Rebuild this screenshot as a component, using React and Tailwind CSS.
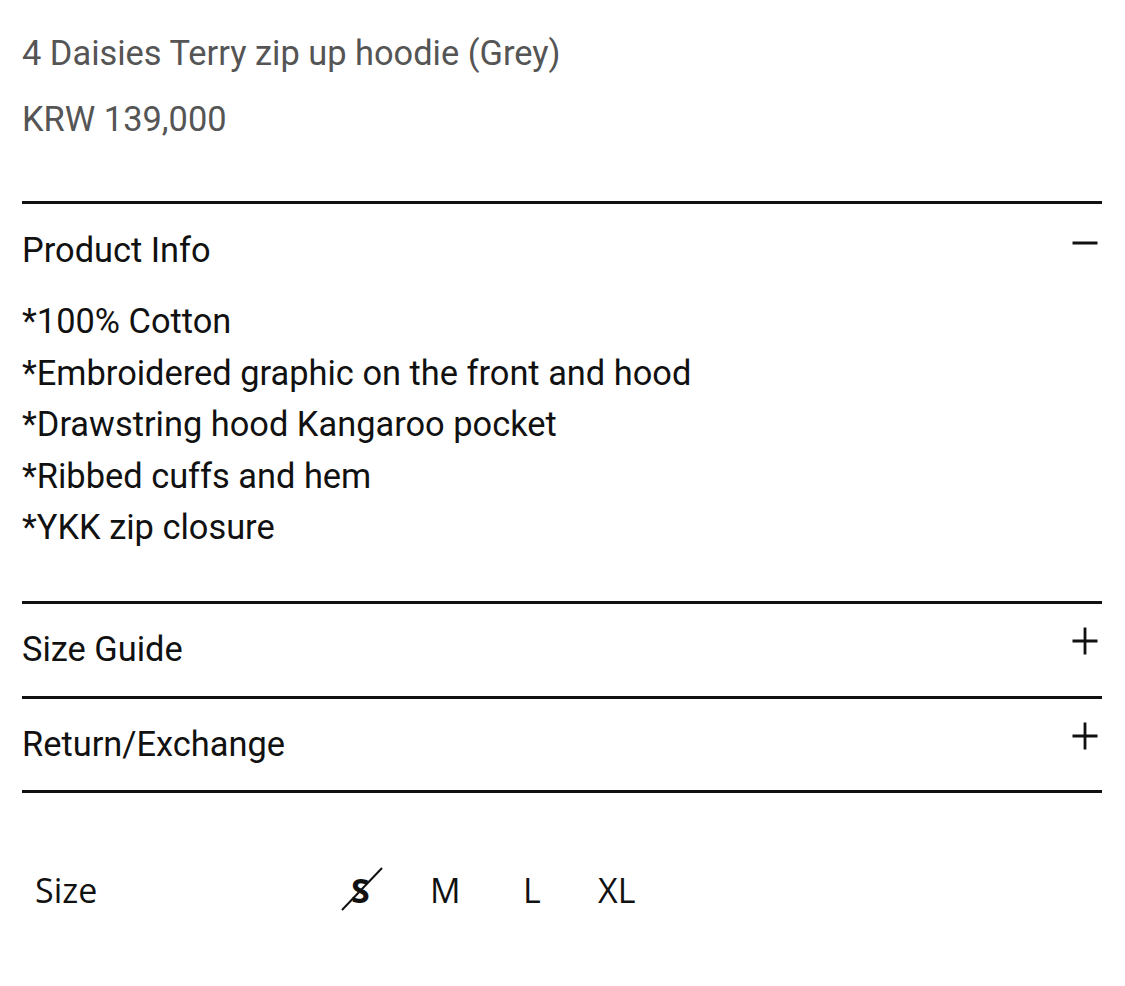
const infoLines = [
  "*100% Cotton",
  "*Embroidered graphic on the front and hood",
  "*Drawstring hood Kangaroo pocket",
  "*Ribbed cuffs and hem",
  "*YKK zip closure",
];

const Minus = () => (
  <svg width="26" height="26" viewBox="0 0 26 26" className="mt-[4px] mr-[4px]">
    <path d="M0.5 14h25" stroke="#111" strokeWidth="3" />
  </svg>
);

const Plus = () => (
  <svg width="26" height="28" viewBox="0 0 26 28" className="mt-[3px] mr-[4px]">
    <path d="M0.5 14h25M13 0.5v27" stroke="#111" strokeWidth="2.8" />
  </svg>
);

const Divider = ({ className }) => (
  <div className={`h-[3px] bg-[#111] ${className}`}></div>
);

const App = () => {
  return (
    <div className="w-[1125px] h-[986px] bg-white font-['Roboto',sans-serif] px-[22px] pr-[23px] overflow-hidden">
      <h1 className="pt-[28px] text-[34.4px] leading-[50px] text-[#555]">
        4 Daisies Terry zip up hoodie (Grey)
      </h1>
      <p className="mt-[16px] text-[34.4px] leading-[50px] text-[#555]">
        KRW 139,000
      </p>

      <Divider className="mt-[57px]" />

      <div className="mt-[21px] flex justify-between items-start text-[#111]">
        <span className="text-[34.4px] leading-[50px]">Product Info</span>
        <Minus />
      </div>
      <ul className="mt-[21px] text-[34.4px] leading-[51.5px] text-[#111]">
        {infoLines.map((line, idx) => (
          <li key={idx}>{line}</li>
        ))}
      </ul>

      <Divider className="mt-[47px]" />
      <div className="mt-[20px] flex justify-between items-start text-[#111]">
        <span className="text-[34.4px] leading-[50px]">Size Guide</span>
        <Plus />
      </div>
      <Divider className="mt-[22px]" />
      <div className="mt-[20px] flex justify-between items-start text-[#111]">
        <span className="text-[34.4px] leading-[50px]">Return/Exchange</span>
        <Plus />
      </div>
      <Divider className="mt-[21px]" />

      <div className="mt-[72px] flex items-center h-[50px] font-['Open_Sans',sans-serif] text-[34px] leading-[50px] text-[#111]">
        <span className="ml-[13px] w-[316px]">Size</span>
        <span className="relative font-bold w-[79px]">
          S
          <svg
            width="44"
            height="46"
            viewBox="0 0 44 46"
            className="absolute left-[-10px] top-[2px]"
          >
            <path d="M1 43L41 1" stroke="#111" strokeWidth="2" />
          </svg>
        </span>
        <span className="w-[93px]">M</span>
        <span className="w-[75px]">L</span>
        <span>XL</span>
      </div>
    </div>
  );
};

export default App;
